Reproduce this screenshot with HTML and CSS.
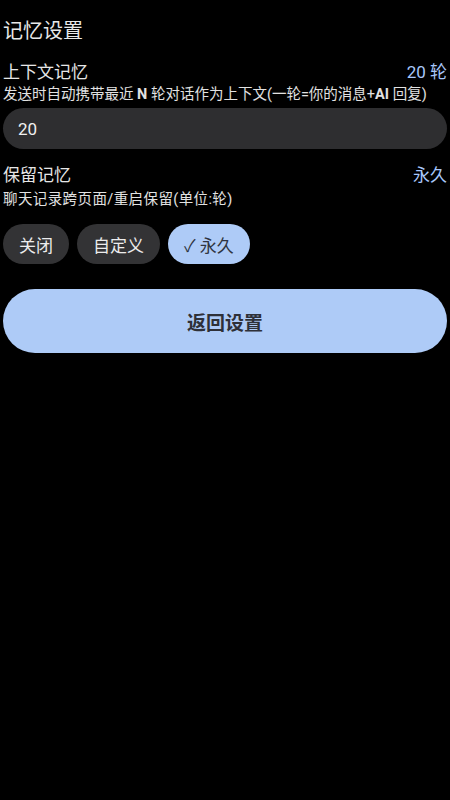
FILE: index.html
```html
<!DOCTYPE html>
<html lang="zh-CN">
<head>
<meta charset="utf-8">
<link rel="stylesheet" href="styles.css">
</head>
<body>
<main class="page">
  <h1 class="title">记忆设置</h1>

  <section class="setting">
    <div class="row">
      <span class="label">上下文记忆</span>
      <span class="value">20 轮</span>
    </div>
    <p class="desc">发送时自动携带最近 <b>N</b> 轮对话作为上下文(一轮=你的消息+<b>AI</b> 回复)</p>
    <input class="field" type="text" value="20">
  </section>

  <section class="setting second">
    <div class="row">
      <span class="label">保留记忆</span>
      <span class="value">永久</span>
    </div>
    <p class="desc desc2">聊天记录跨页面/重启保留(单位:轮)</p>
    <div class="chips">
      <span class="chip">关闭</span>
      <span class="chip">自定义</span>
      <span class="chip selected">✓ 永久</span>
    </div>
  </section>

  <button class="back">返回设置</button>
</main>
</body>
</html>
```
FILE: styles.css
```css
html, body {
  margin: 0;
  padding: 0;
  background: #000;
}
body {
  font-family: Roboto, "Noto Sans CJK SC", sans-serif;
  color: #e6e6e6;
}
.page {
  padding: 17px 3px 0 3px;
  display: flex;
  flex-direction: column;
}
.title {
  margin: 0;
  font-size: 20px;
  line-height: 28px;
  font-weight: 400;
  color: #e8e8e8;
}
.setting {
  display: flex;
  flex-direction: column;
  margin-top: 16px;
}
.setting.second {
  margin-top: 15px;
}
.row {
  display: flex;
  justify-content: space-between;
  align-items: center;
  height: 22px;
}
.label {
  font-size: 17px;
  line-height: 22px;
}
.value {
  font-size: 17px;
  line-height: 22px;
  color: #a8c7fa;
}
.desc {
  margin: 2px 0 0 0;
  font-size: 14.5px;
  line-height: 20px;
  color: #e2e2e2;
  white-space: nowrap;
}
.desc b {
  font-weight: 700;
}
.desc2 {
  margin-top: 4px;
  letter-spacing: 0.4px;
}
.field {
  margin-top: 3px;
  height: 41px;
  box-sizing: border-box;
  border: none;
  outline: none;
  border-radius: 21px;
  background: #2e2e30;
  color: #f0f0f0;
  font-family: Roboto, "Noto Sans CJK SC", sans-serif;
  font-size: 17px;
  padding: 0 15px;
  width: 100%;
}
.chips {
  display: flex;
  gap: 8px;
  margin-top: 14px;
}
.chip {
  height: 40px;
  box-sizing: border-box;
  padding: 0 16px;
  border-radius: 20px;
  background: #333335;
  color: #ececec;
  font-size: 17px;
  display: flex;
  align-items: center;
}
.chip.selected {
  background: #aecbf7;
  color: #2f3440;
}
.back {
  margin-top: 25px;
  height: 64px;
  border: none;
  border-radius: 32px;
  background: #aecbf7;
  color: #2e3038;
  font-family: Roboto, "Noto Sans CJK SC", sans-serif;
  font-size: 19px;
  font-weight: 700;
  width: 100%;
}
```
